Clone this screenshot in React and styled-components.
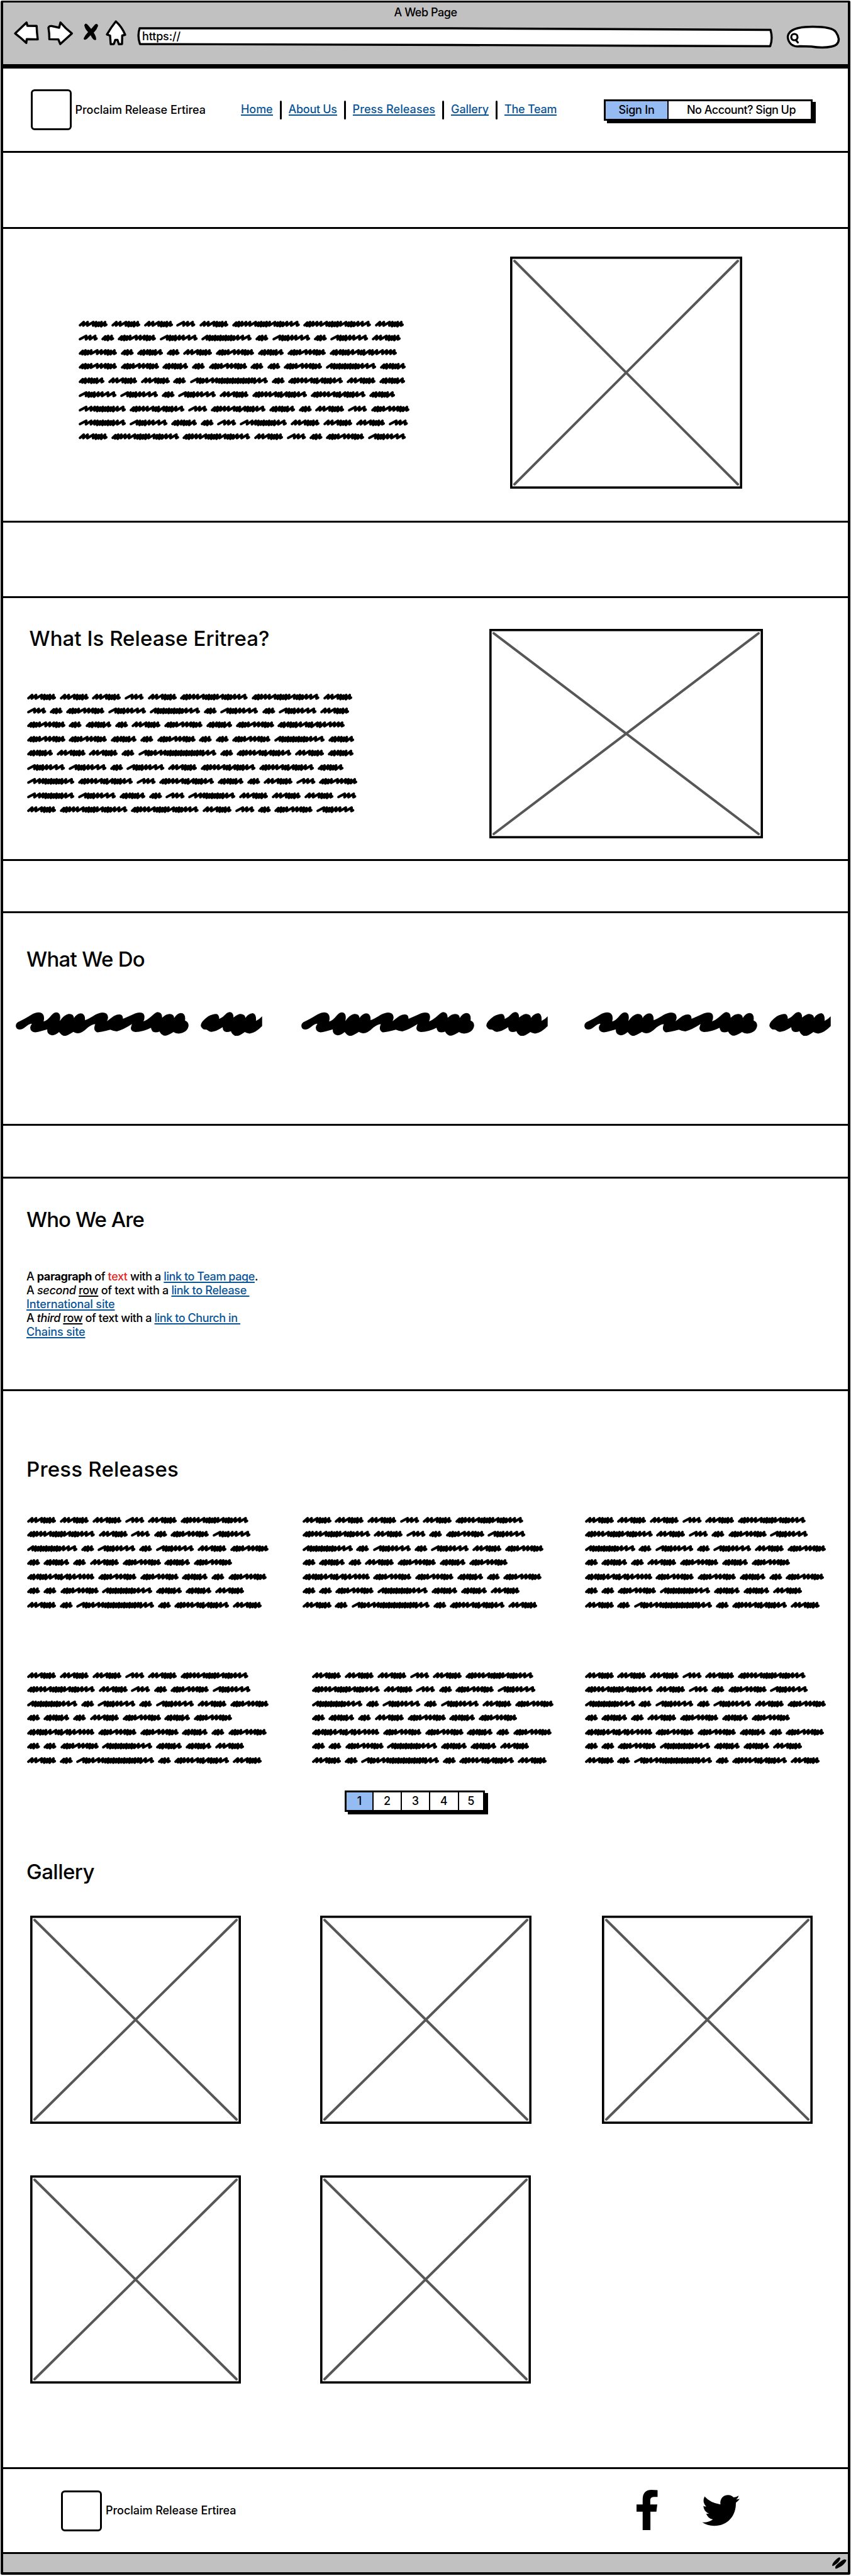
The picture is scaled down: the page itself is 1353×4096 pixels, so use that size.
import React, { useLayoutEffect, useRef, useState } from 'react';
import styled, { createGlobalStyle, css } from 'styled-components';

const LINK = '#0b5597';
const BLUE = '#94bbf2';
const CHROME = '#c1c1c1';
const SKETCH = 0.7091;

const GlobalStyle = createGlobalStyle`
  *, *::before, *::after { box-sizing: border-box; }
  html, body { margin: 0; padding: 0; background: #fff; }
  body { font-family: Inter, "Open Sans", sans-serif; color: #000; }
`;

const Page = styled.div`
  width: 1353px;
  height: 4096px;
  padding: 1px 1px 2px;
  overflow: hidden;
  background: #fff;
`;

const Frame = styled.div`
  display: flex;
  flex-direction: column;
  width: 1351px;
  height: 4093px;
  border: 4px solid #000;
  border-top-width: 3px;
  border-radius: 2px;
`;

/* ---------- text ---------- */

const TextBox = styled.span`
  display: block;
  flex: none;
  white-space: pre;
  font-size: ${(p) => p.$size}px;
  font-weight: 500;
  line-height: ${(p) => p.$line}px;
`;

/* A line of text whose letter spacing is adjusted to fill the given width. */
function FitText({ width, size = 18, line = 24, children, ...rest }) {
  const ref = useRef(null);
  const [spacing, setSpacing] = useState(0);
  useLayoutEffect(() => {
    const el = ref.current;
    const natural = el.getBoundingClientRect().width;
    setSpacing((width - natural) / el.textContent.length);
  }, [width]);
  return (
    <TextBox $size={size} $line={line} style={{ width }} {...rest}>
      <span ref={ref} style={{ letterSpacing: spacing }}>{children}</span>
    </TextBox>
  );
}

const NavLink = styled.a`
  display: flex;
  align-items: center;
  height: 18px;
  margin-top: 1px;
  color: ${LINK};
  border-bottom: 2px solid ${LINK};
`;

const Link = styled.span`
  color: ${LINK};
  text-decoration: underline;
  text-decoration-thickness: 2px;
  text-underline-offset: 2px;
  text-decoration-skip-ink: none;
`;

const Underlined = styled.span`
  text-decoration: underline;
  text-decoration-thickness: 2px;
  text-underline-offset: 2px;
`;

const Red = styled.span`
  color: #dc2a2a;
`;

const Heading = styled.h2`
  margin: 0 0 0 ${(p) => p.$left}px;
  font-weight: 500;
`;

/* ---------- browser chrome ---------- */

const Chrome = styled.header`
  flex: none;
  height: 98px;
  background: ${CHROME};
`;

const WindowTitle = styled.div`
  display: flex;
  justify-content: center;
  padding-top: 4px;
  height: 28px;
`;

const Toolbar = styled.div`
  display: flex;
  align-items: flex-start;
  height: 52px;
  padding-left: 14px;
`;

const ToolIcon = styled.svg`
  flex: none;
  display: block;
  overflow: visible;
`;

const UrlField = styled.div`
  position: relative;
  flex: none;
  width: 1011px;
  height: 33px;
  margin: 11px 0 0 18px;
`;

const FieldShape = styled.svg`
  position: absolute;
  inset: 0;
`;

const UrlText = styled.div`
  position: relative;
  padding: 3px 0 0 8px;
`;

const SearchShape = styled(ToolIcon)`
  margin: 8px 0 0 21px;
`;

/* ---------- page panels ---------- */

const Panel = styled.section`
  flex: none;
  height: ${(p) => p.$h}px;
  border-bottom: 3px solid #000;
  ${(p) => p.$row && css`
    display: flex;
    align-items: flex-start;
  `}
`;

const NavBar = styled.nav`
  flex: none;
  display: flex;
  align-items: center;
  height: 141px;
  border-top: 7px solid #000;
  border-bottom: 3px solid #000;
  padding-left: 43.5px;
`;

const Logo = styled.div`
  flex: none;
  width: 65px;
  height: 65px;
  border: 3px solid #000;
  border-radius: 6px;
  margin-right: 6px;
`;

const Links = styled.div`
  display: flex;
  align-items: center;
  margin-left: 56px;
  width: 577px;
`;

const Separator = styled.span`
  flex: none;
  width: 3px;
  height: 30px;
  margin: 0 11px;
  border-radius: 2px;
  background: #000;
`;

const ButtonGroup = styled.div`
  flex: none;
  display: flex;
  width: ${(p) => p.$w}px;
  height: ${(p) => p.$h}px;
  border: 3px solid #000;
  box-shadow: 5px 4px 0 #000;
`;

const Segment = styled.button`
  display: flex;
  align-items: center;
  justify-content: center;
  flex: ${(p) => (p.$w ? `0 0 ${p.$w}px` : '1 1 0')};
  padding: 0 0 0 ${(p) => p.$indent || 0}px;
  border: 0;
  border-left: ${(p) => (p.$first ? 0 : 2)}px solid #000;
  background: ${(p) => (p.$active ? BLUE : '#fff')};
  color: #000;
  font-family: inherit;
`;

const Column = styled.div`
  flex: none;
  width: ${(p) => p.$w}px;
  margin: ${(p) => p.$top || 0}px 0 0 ${(p) => p.$left || 0}px;
`;

const Placeholder = styled.svg`
  display: block;
  flex: none;
  margin: ${(p) => p.$top || 0}px 0 0 ${(p) => p.$left || 0}px;
`;

function ImageBox({ w, h, top, left }) {
  return (
    <Placeholder width={w} height={h} $top={top} $left={left}>
      <rect x="1.8" y="1.8" width={w - 3.6} height={h - 3.6} fill="#fff" stroke="#000" strokeWidth="3.6" />
      <path
        d={`M7 7L${w - 7} ${h - 7}M${w - 7} 7L7 ${h - 7}`}
        stroke="#575757"
        strokeWidth="4"
        strokeLinecap="round"
      />
    </Placeholder>
  );
}

/* ---------- scribbled copy ---------- */

/* Every word is a run of pen strokes; each number is the advance of one stroke. */
const WORDS = {
  a: [8, 9, 13, 6, 6, 6, 8],
  b: [14, 9, 11],
  c: [6, 6, 8],
  d: [6, 6, 6, 7, 14, 9, 9, 6, 6, 8],
  e: [14, 6, 6, 6, 9, 9, 13, 13],
  f: [10, 6, 6, 6, 6, 6, 6, 6, 6, 6, 6, 9, 11, 14],
  g: [6, 6, 7, 9, 9, 13, 6, 6, 6, 6, 7, 12, 6, 6, 6, 9, 10, 13],
  h: [6, 6, 9, 6, 6, 6, 10, 13, 6, 6, 13, 6, 10, 13, 9, 9, 8],
  i: [6, 6, 8, 6, 6, 6, 11],
  j: [14, 6, 6, 9, 13, 9, 6, 6, 6, 6, 6, 6, 6, 6, 6, 6, 6, 6, 7, 6, 11, 13],
  k: [6, 6, 7, 9, 9, 13, 6, 6, 12, 6, 6, 6, 9, 13],
  l: [14, 11, 8, 6, 6, 6, 6, 6, 6, 6, 9, 13],
};

const LONG_COPY = ['aaabagga', 'bcdefcecea', 'dcicadidh', 'ddicdccdfi', 'iaacjckai', 'eeceakki', 'lkbkicabd', 'leicblaaab', 'aggabcde'];
const SHORT_COPY = ['aaabag', 'gabcde', 'fcecead', 'cicadid', 'hddicd', 'ccdfiia', 'acjcka'];

const ScribbleBlock = styled.div`
  display: flex;
  flex-direction: column;
`;

const ScribbleLine = styled.div`
  display: flex;
  align-items: center;
  gap: 5.8px;
  height: 22.44px;
`;

const Word = styled.svg`
  display: block;
  flex: none;
  overflow: visible;
`;

function strokePath(advances) {
  let x = 3;
  let d = 'M3 10.2';
  advances.forEach((adv, n) => {
    const dense = adv <= 6;
    const top = dense ? 4 - (n % 2) : 3;
    const bottom = dense ? 11.6 + (n % 2) * 0.8 : 10.8;
    d += `L${x + adv * 0.95 + 0.8} ${top}`;
    x += adv;
    d += `L${x - 0.6} ${bottom}`;
  });
  return `${d}L${x + 3.2} 9`;
}

function Scribble({ lines }) {
  return (
    <ScribbleBlock>
      {lines.map((line, r) => (
        <ScribbleLine key={r}>
          {line.split('').map((key, n) => {
            const w = WORDS[key].reduce((s, v) => s + v, 9);
            return (
              <Word key={n} width={w * SKETCH} height={15 * SKETCH} viewBox={`0 0 ${w} 15`}>
                <path d={strokePath(WORDS[key])} fill="none" stroke="#000" strokeWidth="5.7" strokeLinejoin="round" strokeLinecap="round" />
              </Word>
            );
          })}
        </ScribbleLine>
      ))}
    </ScribbleBlock>
  );
}

const BigRow = styled.div`
  display: flex;
  margin-top: 62.5px;
  padding-left: 19.6px;
`;

function BigScribble({ gap }) {
  return (
    <Placeholder width="392" height="38.5" viewBox="45 85 1658.5 163" $left={gap}>
      <path d="M45 178Q45 158 70 148Q100 135 150 104Q190 80 220 93Q242 108 232 150Q255 145 285 107Q310 80 332 92Q350 105 341 146Q370 105 400 99Q432 95 437 126Q455 98 480 95Q513 95 511 141Q540 130 580 104Q630 78 655 97Q675 115 659 147Q680 130 705 112Q740 95 757 106Q768 115 766 132Q800 118 850 95Q890 83 905 98Q918 120 904 149Q930 140 960 113Q985 88 1000 86Q1030 88 1030 124Q1055 100 1080 99Q1110 100 1111 126Q1130 95 1155 92Q1190 92 1184 143Q1208 150 1208 178Q1200 225 1140 231Q1120 230 1106 220Q1075 240 1055 245L1042 245Q1020 235 1013 217Q960 235 955 192Q900 220 850 220Q815 215 820 190Q824 175 827 167Q770 205 725 216Q700 215 681 205Q610 225 590 222Q570 210 574 188Q576 175 580 168Q560 168 530 190Q490 230 460 229Q445 226 432 219Q400 240 380 246L366 246Q350 240 336 221Q310 245 285 242Q253 235 257 203Q200 220 175 223Q142 220 142 190Q145 175 153 165Q140 160 105 190Q85 205 70 204Q45 200 45 178Z" />
      <path d="M1290 175Q1292 150 1340 115Q1380 95 1400 100Q1415 110 1414 133Q1440 120 1465 93Q1480 83 1492 87Q1512 95 1510 123Q1540 98 1560 99Q1590 102 1590 125Q1610 95 1640 93Q1665 97 1662 145Q1685 135 1703 115L1703 180Q1660 225 1619 231Q1600 228 1586 220Q1560 240 1540 246L1520 246Q1500 235 1493 215Q1440 235 1437 188Q1390 220 1360 219Q1345 218 1330 205L1310 202Q1290 190 1290 175Z" />
    </Placeholder>
  );
}

/* ---------- who we are ---------- */

const Paragraph = styled.div`
  margin: 59px 0 0 37px;
`;

/* ---------- press and gallery ---------- */

const PressRow = styled.div`
  display: flex;
  height: 158px;
  margin-top: ${(p) => p.$top}px;
`;

const Pager = styled.div`
  margin: 36px 0 0 543px;
`;

const PAGE_WIDTHS = [41, 45, 45, 45.5, 0];

const GalleryRow = styled.div`
  display: flex;
  height: 331px;
  margin: ${(p) => p.$top}px 0 0 42.5px;
`;

const Footer = styled.footer`
  flex: none;
  display: flex;
  align-items: center;
  height: 135px;
  padding-left: 92px;
  border-bottom: 3px solid #000;
`;

const SocialIcon = styled(ToolIcon)`
  margin: ${(p) => p.$top}px 0 0 ${(p) => p.$left}px;
`;

const StatusBar = styled.div`
  flex: 1;
  display: flex;
  justify-content: flex-end;
  align-items: center;
  padding-right: 2px;
  background: ${CHROME};
`;

const outline = { fill: '#fff', stroke: '#000', strokeWidth: 3.4, strokeLinejoin: 'round' };

export default function App() {
  return (
    <>
      <GlobalStyle />
      <Page>
        <Frame>
          <Chrome>
            <WindowTitle>
              <FitText width={100}>A Web Page</FitText>
            </WindowTitle>
            <Toolbar>
              <ToolIcon width="181" height="42" viewBox="19 32 181 42">
                <path {...outline} d="M24 53.2L42.3 35.8L43.6 41L58.2 41.2Q58.6 52 60 62.6L42.5 62.2L41.8 68.3Q33 60 24 53.2Z" />
                <path {...outline} d="M77 44Q78 41 82 41.4L94 44L96.2 35.8Q104 45 114.3 53.2L95.8 70L92.8 62.6L78.5 62.4Q78.5 52 77 44Z" />
                <path d="M134 40Q136 35 140 40L145 46L151 39Q155 36 156 41Q154 47 149 52Q153 58 153 63Q150 65 147 61L144 56L138 62Q133 65 133 61Q136 55 140 51Q135 46 134 40Z" />
                <path {...outline} d="M184.2 34Q177 43 170 54.8L175 56.5L176 70.2L181 70L183.3 63.4H186.8L189 70.2L194 70L194.3 56.5L199 55.3Q194 43 184.2 34Z" />
              </ToolIcon>
              <UrlField>
                <FieldShape width="1011" height="33" viewBox="0 0 1011 33">
                  <path {...outline} d="M4 2L500 2L1007 4.5Q1011 18 1006.500 30.500L500 28.500L4.500 27Q0 14 4 2Z" />
                </FieldShape>
                <UrlText>
                  <FitText width={61}>https://</FitText>
                </UrlText>
              </UrlField>
              <SearchShape width="86" height="38" viewBox="0 0 86 38">
                <path {...outline} d="M2.500 19C3 8 15 2.500 42 2.500C62 2.500 75 5 79 11Q82.500 16 83.500 22Q83.500 32 72 34Q58 37 40 34L22 33.500Q14 35 8 30.500Q3 26 2.500 19Z" />
                <ellipse cx="13" cy="19" rx="5" ry="5" fill="#fff" stroke="#000" strokeWidth="3.2" />
                <path d="M15.500 24L18.500 27.500" stroke="#000" strokeWidth="3.2" strokeLinecap="round" />
              </SearchShape>
            </Toolbar>
          </Chrome>

          <NavBar>
            <Logo />
            <FitText width={207.5}>Proclaim Release Ertirea</FitText>
            <Links>
              <NavLink><FitText width={50.6}>Home</FitText></NavLink>
              <Separator />
              <NavLink><FitText width={77}>About Us</FitText></NavLink>
              <Separator />
              <NavLink><FitText width={131.5}>Press Releases</FitText></NavLink>
              <Separator />
              <NavLink><FitText width={60}>Gallery</FitText></NavLink>
              <Separator />
              <NavLink><FitText width={83}>The Team</FitText></NavLink>
            </Links>
            <ButtonGroup $w={332} $h={34}>
              <Segment $first $active $w={98}><FitText width={57}>Sign In</FitText></Segment>
              <Segment $indent={5}><FitText width={173}>No Account? Sign Up</FitText></Segment>
            </ButtonGroup>
          </NavBar>

          <Panel $h={120.5} />

          <Panel $h={467.5} $row>
            <Column $w={520} $left={119.8} $top={140.5}><Scribble lines={LONG_COPY} /></Column>
            <ImageBox w={369} h={369} top={44.5} left={166} />
          </Panel>

          <Panel $h={120} />

          <Panel $h={418} $row>
            <Column $w={560} $top={44}>
              <Heading $left={41.5}><FitText width={382} size={33} line={41}>What Is Release Eritrea?</FitText></Heading>
              <Column $left={37.7} $top={60.6} $w={522}><Scribble lines={LONG_COPY} /></Column>
            </Column>
            <ImageBox w={435} h={333} top={49} left={213} />
          </Panel>

          <Panel $h={83} />

          <Panel $h={338}>
            <Column $w={1200} $top={53}>
              <Heading $left={37}><FitText width={188} size={33} line={41}>What We Do</FitText></Heading>
            </Column>
            <BigRow>
              <BigScribble gap={0} />
              <BigScribble gap={62.5} />
              <BigScribble gap={57.5} />
            </BigRow>
          </Panel>

          <Panel $h={84} />

          <Panel $h={338}>
            <Column $w={1200} $top={44.5}>
              <Heading $left={37}><FitText width={187} size={33} line={41}>Who We Are</FitText></Heading>
            </Column>
            <Paragraph>
              <FitText width={368} line={22.2}>A <b>paragraph</b> of <Red>text</Red> with a <Link>link to Team page</Link>.</FitText>
              <FitText width={354.5} line={22.2}>A <i>second</i> <Underlined>row</Underlined> of text with a <Link>link to Release </Link></FitText>
              <FitText width={140.5} line={22.2}><Link>International site</Link></FitText>
              <FitText width={340} line={22.2}>A <i>third</i> <Underlined>row</Underlined> of text with a <Link>link to Church in </Link></FitText>
              <FitText width={93.5} line={22.2}><Link>Chains site</Link></FitText>
            </Paragraph>
          </Panel>

          <Panel $h={1714}>
            <Column $w={1200} $top={104}>
              <Heading $left={37}><FitText width={242} size={33} line={41}>Press Releases</FitText></Heading>
            </Column>
            <PressRow $top={49}>
              <Column $w={400} $left={38}><Scribble lines={SHORT_COPY} /></Column>
              <Column $w={400} $left={37.5}><Scribble lines={SHORT_COPY} /></Column>
              <Column $w={400} $left={49}><Scribble lines={SHORT_COPY} /></Column>
            </PressRow>
            <PressRow $top={89}>
              <Column $w={400} $left={38}><Scribble lines={SHORT_COPY} /></Column>
              <Column $w={400} $left={53}><Scribble lines={SHORT_COPY} /></Column>
              <Column $w={400} $left={33.5}><Scribble lines={SHORT_COPY} /></Column>
            </PressRow>
            <Pager>
              <ButtonGroup $w={223} $h={34}>
                {PAGE_WIDTHS.map((w, k) => (
                  <Segment key={k} $first={k === 0} $active={k === 0} $w={w}>
                    <TextBox $size={18} $line={24}>{k + 1}</TextBox>
                  </Segment>
                ))}
              </ButtonGroup>
            </Pager>
            <Column $w={1200} $top={75}>
              <Heading $left={37}><FitText width={108} size={33} line={41}>Gallery</FitText></Heading>
            </Column>
            <GalleryRow $top={48.5}>
              <ImageBox w={335} h={331} />
              <ImageBox w={336} h={331} left={126.5} />
              <ImageBox w={335} h={331} left={112} />
            </GalleryRow>
            <GalleryRow $top={82}>
              <ImageBox w={335} h={331} />
              <ImageBox w={335} h={331} left={126.5} />
            </GalleryRow>
          </Panel>

          <Footer>
            <Logo />
            <FitText width={207.5}>Proclaim Release Ertirea</FitText>
            <SocialIcon width="33.5" height="64" viewBox="80 126 141 270" $left={636} $top={-3}>
              <path d="M121 396V273H80V224H121V190C121 145 145 126 180 126Q205 126 221 128V173H195Q172 175 172 195V224H219L213 273H173V396Z" />
            </SocialIcon>
            <SocialIcon width="60.3" height="49.500" viewBox="520 166 254 210" $left={70.5} $top={0}>
              <path d="M537 177Q575 220 644 231C638 190 665 166 697 167Q718 168 733 183Q750 181 767 171Q764 186 750 197Q762 197 774 193Q766 207 748 219C750 310 690 376 600 375Q555 374 520 351Q563 354 593 331Q560 326 548 293Q556 294 566 292Q530 276 529 240Q538 245 548 245Q518 216 537 177Z" />
            </SocialIcon>
          </Footer>

          <StatusBar>
            <ToolIcon width="23" height="18.500" viewBox="1394 594 96 77">
              <path d="M1395 652Q1393 638 1408 622Q1430 598 1442 595L1449 600Q1448 615 1428 635Q1410 650 1397 653ZM1417 671Q1410 658 1425 644Q1460 611 1476 608L1489 613Q1485 630 1462 649Q1435 668 1417 671Z" />
            </ToolIcon>
          </StatusBar>
        </Frame>
      </Page>
    </>
  );
}
